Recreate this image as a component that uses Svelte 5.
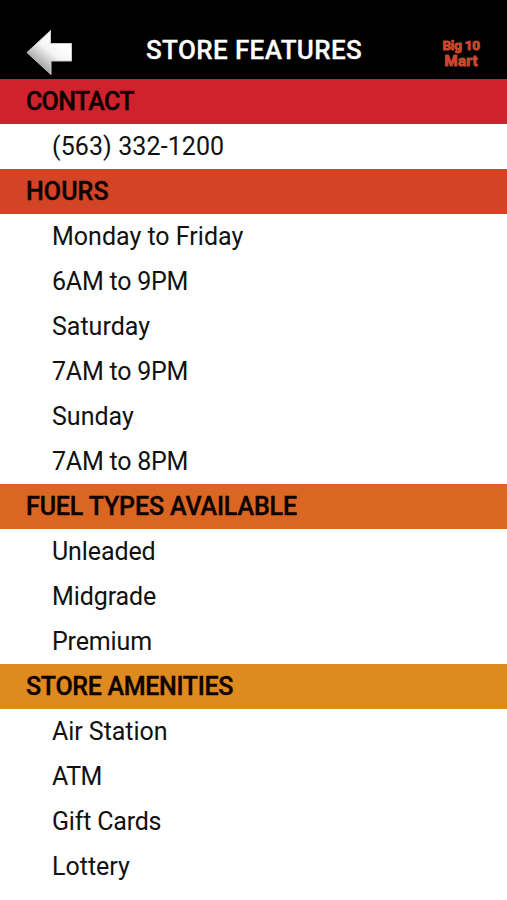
<script>
  const sections = [
    { title: 'CONTACT', color: '#cf222c', spacing: -0.7, items: [['(563) 332-1200', 0.1]] },
    { title: 'HOURS', color: '#d34427', spacing: 0.1, items: [['Monday to Friday', 0], ['6AM to 9PM', -0.22], ['Saturday', 0], ['7AM to 9PM', -0.22], ['Sunday', 0], ['7AM to 8PM', -0.22]] },
    { title: 'FUEL TYPES AVAILABLE', color: '#db6624', spacing: -0.14, items: [['Unleaded', -0.1], ['Midgrade', -0.1], ['Premium', -0.15]] },
    { title: 'STORE AMENITIES', color: '#df8a1f', spacing: -0.32, items: [['Air Station', -0.05], ['ATM', -0.6], ['Gift Cards', -0.2], ['Lottery', 0]] }
  ];
</script>

<main>
  <header>
    <svg class="back" width="50" height="50" viewBox="0 0 50 50">
      <defs>
        <linearGradient id="metal" x1="0.75" y1="0.3" x2="0.3" y2="0.85">
          <stop offset="0" stop-color="#fff" /><stop offset=".4" stop-color="#f4f4f4" /><stop offset="1" stop-color="#a0a0a0" />
        </linearGradient>
      </defs>
      <path d="M2 24.5 25.5 2.5V15.5H46.5V33H26V46.5Z" fill="url(#metal)" stroke="#ccc" stroke-linejoin="round" />
    </svg>
    <h1>STORE FEATURES</h1>
    <svg class="logo" width="58" height="40" viewBox="0 0 58 40">
      <text x="2.5" y="15.5" font-size="13.5" letter-spacing="-.25">Big 10</text>
      <text x="4.5" y="31.5" font-size="15" letter-spacing=".3">Mart</text>
    </svg>
  </header>
  {#each sections as s}
    <section>
      <h2 style:background={s.color} style:letter-spacing="{s.spacing}px">{s.title}</h2>
      {#each s.items as [label, spacing]}<p style:letter-spacing="{spacing}px">{label}</p>{/each}
    </section>
  {/each}
</main>

<style>
  :global(body) { margin: 0; background: #fff; }
  main { width: 507px; height: 900px; overflow: hidden; background: #fff; color: #111; font-family: Roboto, sans-serif; }
  header { height: 79px; background: #000; display: flex; box-sizing: border-box; padding-top: 28px; }
  .back { margin-left: 25px; flex: none; }
  h1 { margin: 8px 0 0 71px; width: 220px; flex: none; font-size: 26px; line-height: 29px; font-weight: 500; color: #fff; white-space: nowrap; letter-spacing: .37px; -webkit-text-stroke: .3px #fff; }
  .logo { margin: 6px 0 0 74px; flex: none; overflow: visible; }
  .logo text { font-family: Roboto, sans-serif; font-weight: 700; fill: #c84830; stroke: #c84830; stroke-width: 1; stroke-linejoin: round; }
  h2 { margin: 0; height: 45px; padding-left: 26px; font-size: 25px; line-height: 45px; font-weight: 500; color: #0c0200; -webkit-text-stroke: .4px #0c0200; }
  p { margin: 0; height: 45px; padding-left: 52px; font-size: 25px; line-height: 45px; }
</style>
